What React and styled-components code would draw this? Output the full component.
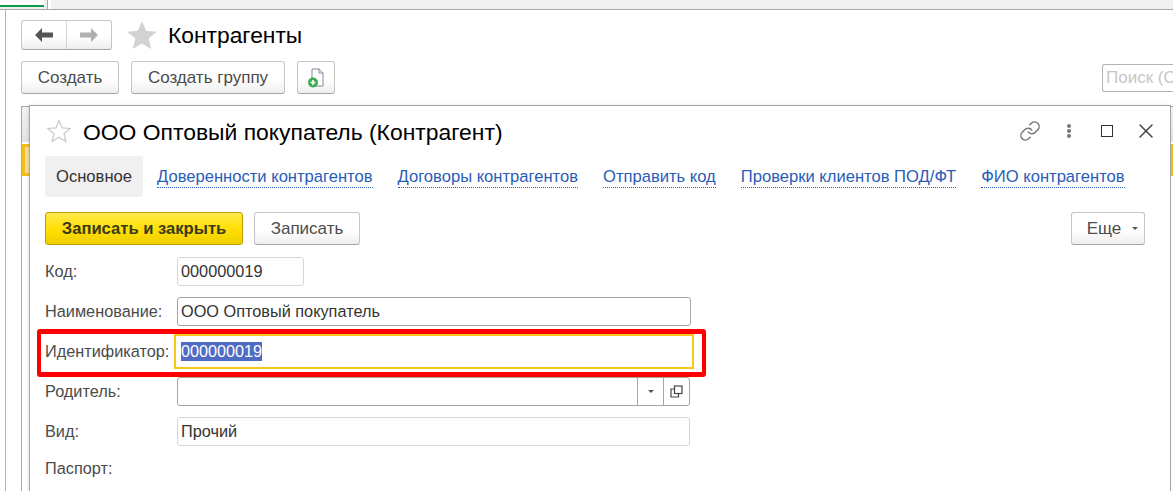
import React from 'react';
import styled, { createGlobalStyle } from 'styled-components';
import { Link, X } from 'lucide-react';

const GlobalStyle = createGlobalStyle`
  html, body {
    margin: 0;
    padding: 0;
    background: #fff;
  }
  body {
    width: 1173px;
    height: 491px;
    overflow: hidden;
    font-family: 'Liberation Sans', Arial, sans-serif;
  }
`;

const tabs = [
  'Доверенности контрагентов',
  'Договоры контрагентов',
  'Отправить код',
  'Проверки клиентов ПОД/ФТ',
  'ФИО контрагентов',
];

const Star = ({ size, solid }) => (
  <svg width={size} height={size} viewBox="0 0 24 24">
    <path
      d="M12 1.5l3.1 7.4 8 .6-6.1 5.2 1.9 7.8L12 18.3 5.1 22.5 7 14.7.9 9.5l8-.6z"
      fill={solid ? '#d2d2d2' : 'none'}
      stroke={solid ? 'none' : '#c9c9c9'}
      strokeWidth="1.2"
    />
  </svg>
);

const NavArrow = ({ flip, color }) => (
  <svg width="18" height="14" viewBox="0 0 18 14" style={flip ? { transform: 'scaleX(-1)' } : undefined}>
    <path d="M0 7L7 0v4.500h11v5H7V14z" fill={color} />
  </svg>
);

const App = () => {
  return (
    <Page>
      <GlobalStyle />
      <TopStrip>
        <ActiveTab />
        <TabDivider />
      </TopStrip>
      <Main>
        <TitleRow>
          <NavGroup>
            <NavCell>
              <NavArrow color="#555" />
            </NavCell>
            <NavCell $divided>
              <NavArrow flip color="#b0b0b0" />
            </NavCell>
          </NavGroup>
          <Star size={32} solid />
          <ListTitle>Контрагенты</ListTitle>
        </TitleRow>
        <ListToolbar>
          <Button $w={98}>Создать</Button>
          <Button $w={154}>Создать группу</Button>
          <Button $w={38}>
            <svg width="18" height="20" viewBox="0 0 18 20">
              <path d="M5 1h7l4 4v13H5z" fill="#fff" stroke="#7d8b99" />
              <path d="M12 1v4h4" fill="none" stroke="#7d8b99" />
              <circle cx="6" cy="14.500" r="5" fill="#3bab4c" />
              <path d="M3.500 14.500h5M6 12v5" stroke="#fff" strokeWidth="1.600" />
            </svg>
          </Button>
          <SearchBox>Поиск (С</SearchBox>
        </ListToolbar>
        <ListBody>
          <Grid>
            <GridHead />
            <GridRow />
          </Grid>
          <Dialog>
            <DialogHeader>
              <DialogStar>
                <Star size={24} />
              </DialogStar>
              <DialogTitle>ООО Оптовый покупатель (Контрагент)</DialogTitle>
              <HeaderIcons>
                <IconSlot>
                  <Link size={22} color="#777" strokeWidth={1.6} />
                </IconSlot>
                <IconSlot>
                  <Dots>
                    <i /><i /><i />
                  </Dots>
                </IconSlot>
                <IconSlot>
                  <Square />
                </IconSlot>
                <IconSlot>
                  <X size={24} color="#444" strokeWidth={1.5} />
                </IconSlot>
              </HeaderIcons>
            </DialogHeader>
            <TabRow>
              <CurrentTab>Основное</CurrentTab>
              {tabs.map((tab) => (
                <TabLink key={tab}>{tab}</TabLink>
              ))}
            </TabRow>
            <ActionRow>
              <PrimaryButton>Записать и закрыть</PrimaryButton>
              <Button $w={106}>Записать</Button>
              <MoreButton>
                Еще <Caret />
              </MoreButton>
            </ActionRow>
            <Form>
              <FieldRow>
                <Label>Код:</Label>
                <Input $w={127} $soft>000000019</Input>
              </FieldRow>
              <FieldRow $top={11}>
                <Label>Наименование:</Label>
                <Input $w={514}>ООО Оптовый покупатель</Input>
              </FieldRow>
              <FieldRow $top={8}>
                <Label>Идентификатор:</Label>
                <FocusInput>
                  <Selected>000000019</Selected>
                </FocusInput>
                <Highlight />
              </FieldRow>
              <FieldRow $top={8}>
                <Label>Родитель:</Label>
                <Input $w={513} $select>
                  <SelectCell><Caret /></SelectCell>
                  <SelectCell>
                    <svg width="13" height="13" viewBox="0 0 13 13" fill="none" stroke="#444" strokeWidth="1.200">
                      <rect x="4.500" y="1" width="7.500" height="7.500" />
                      <path d="M4.500 4H1v8h7.500V8.500" />
                    </svg>
                  </SelectCell>
                </Input>
              </FieldRow>
              <FieldRow $top={11}>
                <Label>Вид:</Label>
                <Input $w={513} $soft>Прочий</Input>
              </FieldRow>
              <FieldRow $top={8}>
                <Label>Паспорт:</Label>
              </FieldRow>
            </Form>
          </Dialog>
        </ListBody>
      </Main>
    </Page>
  );
};

export default App;

const Page = styled.div`
  width: 1173px;
  height: 491px;
  overflow: hidden;
  background: #fff;
  display: flex;
  flex-direction: column;
`;

const TopStrip = styled.div`
  height: 9px;
  background: #f0f0f0;
  border-bottom: 1px solid #a8a8a8;
  display: flex;
  align-items: flex-start;
`;

const ActiveTab = styled.div`
  width: 44px;
  height: 5px;
  background: #fff;
  border-bottom: 2px solid #0b9c4c;
`;

const TabDivider = styled.div`
  width: 3px;
  height: 9px;
  margin-left: 3px;
  background: #fff;
  border-left: 1px solid #a8a8a8;
`;

const Main = styled.div`
  flex: 1;
  margin-left: 5px;
  border-left: 1px solid #b5b5b5;
  padding: 10px 0 0 15px;
  min-height: 0;
  display: flex;
  flex-direction: column;
`;

const TitleRow = styled.div`
  height: 30px;
  display: flex;
  align-items: center;
`;

const NavGroup = styled.div`
  width: 91px;
  height: 30px;
  box-sizing: border-box;
  display: flex;
  border: 1px solid #c6c6c6;
  border-bottom-color: #a5a5a5;
  border-radius: 3px;
  background: linear-gradient(#fff 55%, #eee);
  margin-right: 14px;
`;

const NavCell = styled.div`
  flex: 1;
  display: flex;
  align-items: center;
  justify-content: center;
  border-left: ${(p) => (p.$divided ? '1px solid #d4d4d4' : 'none')};
`;

const ListTitle = styled.h1`
  margin: 0 0 0 10px;
  font-size: 22.8px;
  font-weight: 400;
  color: #000;
`;

const ListToolbar = styled.div`
  height: 33px;
  margin-top: 11px;
  display: flex;
  align-items: center;
  gap: 12px;
`;

const Button = styled.div`
  width: ${(p) => p.$w}px;
  height: 33px;
  box-sizing: border-box;
  display: flex;
  align-items: center;
  justify-content: center;
  flex: none;
  border: 1px solid #c6c6c6;
  border-bottom-color: #a5a5a5;
  border-radius: 3px;
  background: linear-gradient(#fff 55%, #eee);
  color: #4b4b4b;
  font-size: 17px;
`;

const SearchBox = styled.div`
  width: 71px;
  height: 28px;
  box-sizing: border-box;
  margin-left: auto;
  padding: 3px 0 0 3px;
  border: 1px solid #b4b4b4;
  border-right: none;
  border-radius: 3px 0 0 3px;
  color: #c6c6c6;
  font-size: 17px;
  white-space: nowrap;
  overflow: hidden;
`;

const ListBody = styled.div`
  flex: 1;
  margin-top: 11px;
  position: relative;
  min-height: 0;
`;

const Grid = styled.div`
  height: 100%;
  margin-top: 1px;
  box-sizing: border-box;
  border-left: 1px solid #a8a8a8;
  border-top: 1px solid #a8a8a8;
`;

const GridHead = styled.div`
  height: 35px;
  background: linear-gradient(#f2f2f2, #e2e2e2);
`;

const GridRow = styled.div`
  height: 32px;
  margin-top: 2px;
  box-sizing: border-box;
  background: #f7e19a;
  border: 3px solid #f2bd1d;
`;

const Dialog = styled.div`
  position: absolute;
  left: 8px;
  top: 0;
  right: 2px;
  bottom: 0;
  box-sizing: border-box;
  background: #fff;
  border: 1px solid #a5a5a5;
  border-bottom: none;
  padding-left: 15px;
  box-shadow: -1px 0 3px rgba(0, 0, 0, 0.1);
`;

const DialogHeader = styled.div`
  height: 50px;
  display: flex;
  align-items: center;
  padding-right: 5px;
`;

const DialogStar = styled.div`
  display: flex;
  margin-left: 2px;
`;

const DialogTitle = styled.h2`
  margin: 0 0 0 12px;
  padding-top: 2px;
  font-size: 22.9px;
  font-weight: 400;
  color: #000;
  white-space: nowrap;
`;

const HeaderIcons = styled.div`
  margin-left: auto;
  display: flex;
  align-items: center;
`;

const IconSlot = styled.div`
  width: 38.5px;
  display: flex;
  align-items: center;
  justify-content: center;
`;

const Dots = styled.div`
  display: flex;
  flex-direction: column;
  gap: 1px;
  i {
    width: 4px;
    height: 4px;
    border-radius: 50%;
    background: #777;
  }
`;

const Square = styled.div`
  width: 10px;
  height: 10px;
  border: 1px solid #333;
`;

const TabRow = styled.div`
  height: 41px;
  display: flex;
  align-items: center;
  gap: 25px;
`;

const CurrentTab = styled.div`
  width: 98px;
  height: 41px;
  display: flex;
  align-items: center;
  justify-content: center;
  margin-right: -11px;
  background: #f0f0f0;
  border-radius: 3px;
  color: #333;
  font-size: 16.6px;
`;

const TabLink = styled.a`
  margin-top: 1px;
  color: #2a5cb8;
  font-size: 16.58px;
  border-bottom: 1px dotted #2a5cb8;
  white-space: nowrap;
`;

const ActionRow = styled.div`
  height: 33px;
  margin-top: 15px;
  display: flex;
  align-items: center;
  gap: 11px;
  padding-right: 25px;
`;

const PrimaryButton = styled.div`
  width: 198px;
  height: 33px;
  box-sizing: border-box;
  display: flex;
  align-items: center;
  justify-content: center;
  border: 1px solid #c0a000;
  border-radius: 3px;
  background: linear-gradient(#ffe84a, #ffdf00 55%, #efcf00);
  color: #3a3a1c;
  font-size: 16.6px;
  font-weight: 700;
`;

const MoreButton = styled(Button)`
  width: 74px;
  margin-left: auto;
  gap: 11px;
  padding-left: 9px;
`;

const Caret = styled.span`
  width: 0;
  height: 0;
  border-left: 3px solid transparent;
  border-right: 3px solid transparent;
  border-top: 3px solid #555;
`;

const Form = styled.div`
  margin-top: 12px;
  display: flex;
  flex-direction: column;
`;

const FieldRow = styled.div`
  position: relative;
  min-height: 29px;
  margin-top: ${(p) => p.$top || 0}px;
  display: flex;
  align-items: center;
`;

const Label = styled.div`
  width: 132px;
  flex: none;
  color: #4b4b4b;
  font-size: 16.3px;
`;

const Input = styled.div`
  width: ${(p) => p.$w}px;
  height: 29px;
  box-sizing: border-box;
  display: flex;
  align-items: center;
  justify-content: ${(p) => (p.$select ? 'flex-end' : 'flex-start')};
  padding-left: ${(p) => (p.$select ? 0 : 3)}px;
  border: 1px solid ${(p) => (p.$soft ? '#d6d6d6' : '#a5a5a5')};
  border-radius: 3px;
  color: #333;
  font-size: 16.3px;
  white-space: nowrap;
`;

const SelectCell = styled.div`
  width: 26px;
  height: 100%;
  box-sizing: border-box;
  display: flex;
  align-items: center;
  justify-content: center;
  border-left: 1px solid #a5a5a5;
`;

const FocusInput = styled.div`
  width: 520px;
  height: 35px;
  box-sizing: border-box;
  margin-left: -3px;
  padding-left: 5px;
  display: flex;
  align-items: center;
  border: 2px solid #fbc61b;
  font-size: 16.2px;
`;

const Selected = styled.span`
  background: #4f6bc4;
  color: #fff;
`;

const Highlight = styled.div`
  position: absolute;
  left: -8px;
  top: -5px;
  width: 669px;
  height: 48px;
  box-sizing: border-box;
  border: 4px solid #fe0000;
  border-top-width: 5px;
  border-bottom-width: 5px;
  border-radius: 3px;
`;
